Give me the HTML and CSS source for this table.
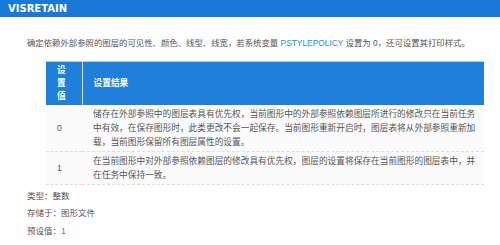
FILE: index.html
```html
<!DOCTYPE html>
<html lang="zh">
<head>
<meta charset="utf-8">
<link rel="stylesheet" href="styles.css">
</head>
<body>
<div class="titlebar"><h1 class="title">VISRETAIN</h1></div>
<div class="content">
  <p class="desc">确定依赖外部参照的图层的可见性、颜色、线型、线宽，若系统变量 <span class="link">PSTYLEPOLICY</span> 设置为 0，还可设置其打印样式。</p>
  <table class="tbl">
    <thead>
      <tr><th class="c1">设置值</th><th class="c2">设置结果</th></tr>
    </thead>
    <tbody>
      <tr><td class="c1">0</td><td class="c2">储存在外部参照中的图层表具有优先权，当前图形中的外部参照依赖图层所进行的修改只在当前任务中有效，在保存图形时，此类更改不会一起保存。当前图形重新开启时，图层表将从外部参照重新加载，当前图形保留所有图层属性的设置。</td></tr>
      <tr><td class="c1">1</td><td class="c2">在当前图形中对外部参照依赖图层的修改具有优先权，图层的设置将保存在当前图形的图层表中，并在任务中保持一致。</td></tr>
    </tbody>
  </table>
  <div class="meta">
    <p class="meta-row">类型：整数</p>
    <p class="meta-row">存储于：图形文件</p>
    <p class="meta-row">预设值：<span class="link">1</span></p>
  </div>
</div>
</body>
</html>
```
FILE: styles.css
```css
* { box-sizing: border-box; }
html, body { margin: 0; padding: 0; background: #fff; }
body {
  font-family: "Liberation Sans", "Noto Sans CJK SC", sans-serif;
  color: #555;
}
.titlebar {
  background: #1a78d6;
  height: 17px;
  padding-left: 8px;
  display: flex;
  align-items: center;
}
.title {
  margin: 0;
  font-family: "DejaVu Sans", sans-serif;
  font-weight: bold;
  font-size: 10px;
  line-height: 17px;
  color: #fff;
}
.content { padding: 0 27px; }
.desc {
  margin: 19px 0 0;
  font-size: 8.4px;
  line-height: 14px;
  height: 14px;
  white-space: nowrap;
}
.link { color: #2a8ae6; }
.tbl {
  margin: 11px 0 0 19px;
  width: 438px;
  border-collapse: collapse;
  font-size: 8.7px;
  table-layout: fixed;
}
.tbl th {
  background: #1f80dc;
  color: #fff;
  font-weight: bold;
  text-align: left;
  line-height: 13px;
  height: 43px;
  padding: 0 11px;
  border-top: 1px solid #a9cdf0;
}
.tbl th.c1 { width: 36px; border-right: 1px solid #cfe3f7; }
.tbl td {
  background: #fbfbfb;
  line-height: 14px;
  padding: 2px 8px 2px 11px;
  border-bottom: 1px dashed #dedede;
  vertical-align: middle;
}
.tbl td.c1 { padding-left: 11px; }
.meta { margin-top: 3px; }
.meta-row {
  margin: 0;
  font-size: 8.5px;
  line-height: 17.5px;
  height: 17.5px;
}
```
